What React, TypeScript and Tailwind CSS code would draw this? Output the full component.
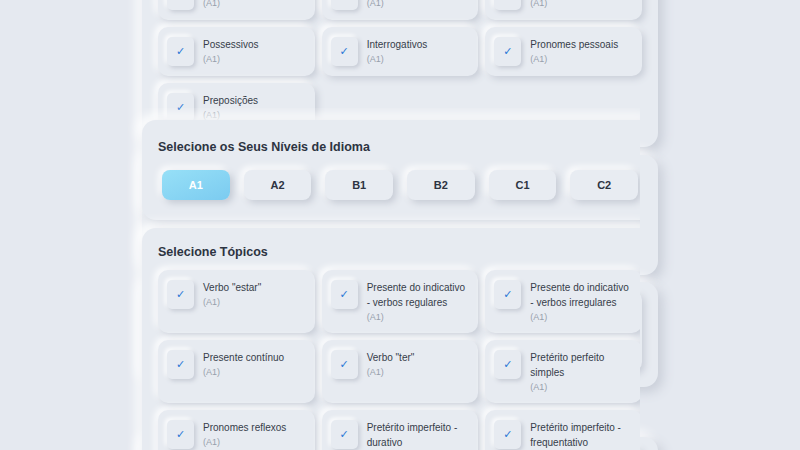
import React from 'react'

type Topic = { lines: string[]; level?: string }

const FONT = { fontFamily: '"Liberation Sans", Arial, sans-serif' }

const BACK_TOPICS: Topic[] = [
  { lines: ['Artigos definidos'], level: 'A1' },
  { lines: ['Artigos indefinidos'], level: 'A1' },
  { lines: ['Demonstrativos'], level: 'A1' },
  { lines: ['Possessivos'], level: 'A1' },
  { lines: ['Interrogativos'], level: 'A1' },
  { lines: ['Pronomes pessoais'], level: 'A1' },
  { lines: ['Preposições'], level: 'A1' },
]

const FRONT_TOPICS: Topic[] = [
  { lines: ['Verbo "estar"'], level: 'A1' },
  { lines: ['Presente do indicativo', '- verbos regulares'], level: 'A1' },
  { lines: ['Presente do indicativo', '- verbos irregulares'], level: 'A1' },
  { lines: ['Presente contínuo'], level: 'A1' },
  { lines: ['Verbo "ter"'], level: 'A1' },
  { lines: ['Pretérito perfeito', 'simples'], level: 'A1' },
  { lines: ['Pronomes reflexos'], level: 'A1' },
  { lines: ['Pretérito imperfeito -', 'durativo'], level: 'A1' },
  { lines: ['Pretérito imperfeito -', 'frequentativo'], level: 'A1' },
]

const LEVELS = ['A1', 'A2', 'B1', 'B2', 'C1', 'C2']

function TopicCard({ topic }: { topic: Topic }) {
  return (
    <div className="flex min-h-[49px] items-start gap-[9px] rounded-[10px] bg-[#e7ebf1] px-[9px] pt-[10px] pb-[9px] shadow-[3px_3px_7px_#c9ced8,-3px_-3px_7px_#ffffff]">
      <div className="flex h-[29px] w-[27px] shrink-0 items-center justify-center rounded-[5px] bg-[#e7ebf1] shadow-[2px_2px_4px_#c6cbd5,-2px_-2px_4px_#ffffff]">
        <span className="text-[11px] font-bold leading-none text-[#2a78d6]" style={{ fontFamily: '"DejaVu Sans", sans-serif' }}>
          ✓
        </span>
      </div>
      <div className="flex flex-col">
        {topic.lines.map((l) => (
          <span key={l} className="text-[10px] leading-[15px] text-[#363d4a]">
            {l}
          </span>
        ))}
        {topic.level && <span className="text-[9px] leading-[14px] text-[#979fac]">({topic.level})</span>}
      </div>
    </div>
  )
}

function Panel({ className = '', children }: { className?: string; children?: React.ReactNode }) {
  return (
    <div className={`rounded-[14px] bg-[#e7ebf1] shadow-[5px_5px_12px_#c9ced8,-5px_-5px_12px_#ffffff] ${className}`}>
      {children}
    </div>
  )
}

export default function App() {
  return (
    <div className="relative h-[450px] w-[800px] overflow-hidden bg-[#e5e9f0]" style={FONT}>
      {/* back layer */}
      <div className="absolute left-[142px] top-0 flex w-[516px] flex-col">
        <Panel className="-mt-[45px] px-4 pt-4 pb-[15px]">
          <div className="grid grid-cols-3 gap-[7px]">
            {BACK_TOPICS.map((t, i) => (
              <TopicCard key={i} topic={t} />
            ))}
          </div>
        </Panel>
        <Panel className="mt-2 h-[120px]" />
        <Panel className="mt-[7px] h-[105px] px-4 pt-2">
          <div className="grid grid-cols-3 gap-[7px]">
            <div />
            <div />
            <div className="h-[82px] rounded-[10px] bg-[#e7ebf1] shadow-[3px_3px_7px_#c9ced8,-3px_-3px_7px_#ffffff]" />
          </div>
        </Panel>
        <Panel className="mt-[50px] h-[100px] px-4 pt-2">
          <div className="grid grid-cols-3 gap-[7px]">
            <div />
            <div />
            <div className="h-[90px] rounded-[10px] bg-[#e7ebf1] shadow-[3px_3px_7px_#c9ced8,-3px_-3px_7px_#ffffff]" />
          </div>
        </Panel>
      </div>

      {/* front layer */}
      <div className="absolute left-0 top-[108px] h-[342px] w-[640px] overflow-hidden">
        <div className="ml-[142px] mt-[12px] flex w-[516px] flex-col gap-2">
          <Panel className="h-[100px] px-4 pt-[18px]">
            <h2 className="text-[12.5px] font-bold leading-[18px] text-[#2d3442]">Selecione os Seus Níveis de Idioma</h2>
            <div className="mt-[14px] grid grid-cols-6 gap-[14px] px-1">
              {LEVELS.map((lv, i) => (
                <button
                  key={lv}
                  className={
                    i === 0
                      ? 'h-[30px] rounded-lg bg-gradient-to-br from-[#97e0f7] to-[#7bcbf0] text-[11px] font-bold text-white shadow-[3px_3px_7px_#c3c9d3,-3px_-3px_7px_#ffffff]'
                      : 'h-[30px] rounded-lg bg-[#e8ecf2] text-[11px] font-bold text-[#2d3442] shadow-[3px_3px_7px_#c6cbd5,-3px_-3px_7px_#ffffff]'
                  }
                >
                  {lv}
                </button>
              ))}
            </div>
          </Panel>
          <Panel className="px-4 pt-[15px] pb-4">
            <h2 className="mb-[9px] text-[12.5px] font-bold leading-[18px] text-[#2d3442]">Selecione Tópicos</h2>
            <div className="grid grid-cols-3 gap-[7px]">
              {FRONT_TOPICS.map((t, i) => (
                <TopicCard key={i} topic={t} />
              ))}
            </div>
          </Panel>
        </div>
      </div>
    </div>
  )
}
